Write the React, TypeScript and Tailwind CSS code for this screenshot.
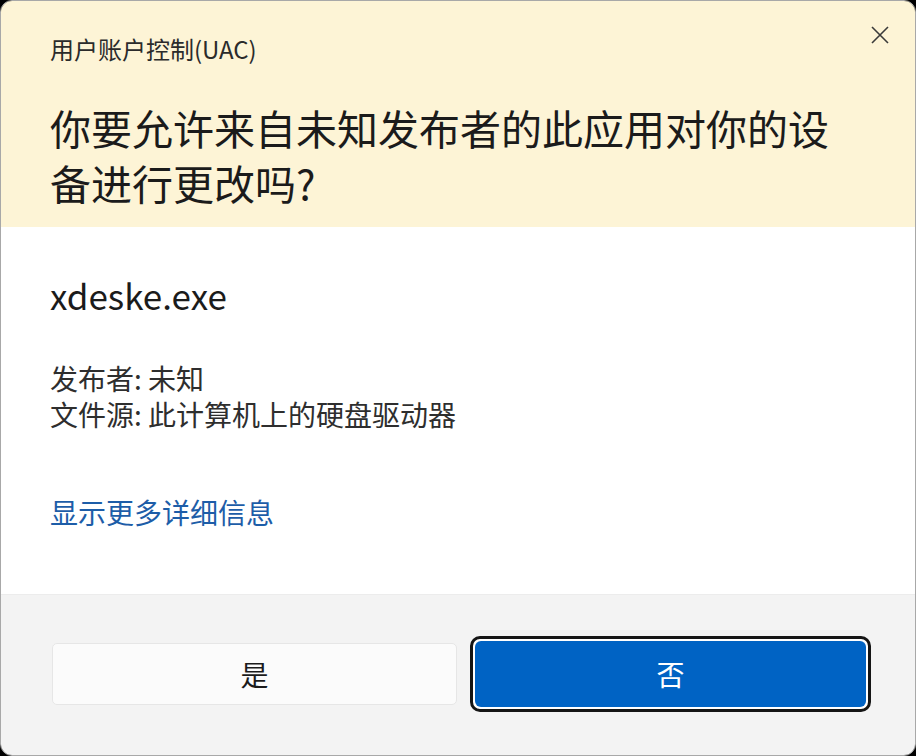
export default function App() {
  const font = { fontFamily: '"Noto Sans CJK SC", "Noto Sans", sans-serif' };
  return (
    <div className="h-[756px] w-[916px] bg-black" style={font}>
      <div className="flex h-full w-full flex-col overflow-hidden rounded-[12px] border border-[#a8a8a8]">
        {/* header */}
        <div className="relative h-[226px] bg-[#fdf4d6] pl-[49px] pt-[32px]">
          <div className="text-[24px] leading-[32px] text-[#2b2b2b]">用户账户控制(UAC)</div>
          <div className="mt-[35px] w-[800px] text-[41px] leading-[55px] text-[#1b1b1b]">
            你要允许来自未知发布者的此应用对你的设备进行更改吗?
          </div>
          <button className="absolute right-[25px] top-[24px] text-[#3a3a3a]" aria-label="关闭">
            <svg width="20" height="20" viewBox="0 0 20 20" fill="none" stroke="currentColor" strokeWidth="1.6">
              <path d="M2 2 L18 18 M18 2 L2 18" />
            </svg>
          </button>
        </div>

        {/* body */}
        <div className="flex-1 bg-white pl-[49px] pt-[48px]">
          <div className="text-[35px] leading-[40px] text-[#1b1b1b]">xdeske.exe</div>
          <div className="mt-[45px] text-[28px] leading-[36px] text-[#2e2e2e]">
            <div>发布者: 未知</div>
            <div>文件源: 此计算机上的硬盘驱动器</div>
          </div>
          <a className="mt-[62px] block text-[28px] leading-[36px] text-[#1d5da8]">显示更多详细信息</a>
        </div>

        {/* footer */}
        <div className="flex h-[161px] items-center gap-[13px] border-t border-[#ececec] bg-[#f3f3f3] pb-[2px] pl-[51px]">
          <button className="h-[62px] w-[405px] rounded-[5px] border border-[#e6e6e6] bg-[#fbfbfb] text-[28px] text-[#1b1b1b]">
            是
          </button>
          <button className="h-[76px] w-[401px] rounded-[10px] border-[3px] border-[#151515] bg-white p-[2px]">
            <div className="flex h-full w-full items-center justify-center rounded-[6px] bg-[#0063c4] text-[28px] text-white">
              否
            </div>
          </button>
        </div>
      </div>
    </div>
  );
}
